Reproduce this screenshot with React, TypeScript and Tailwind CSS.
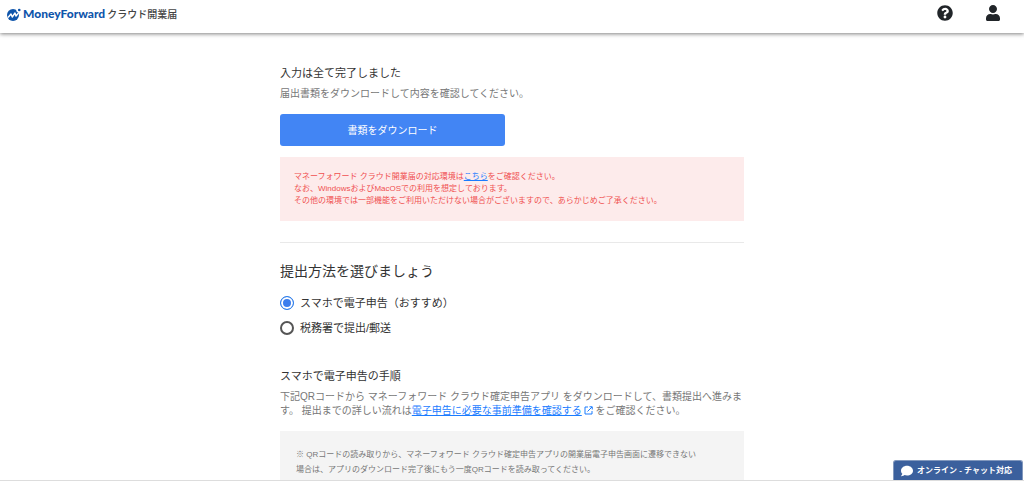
import { useState } from "react";
import { FaComment, FaQuestionCircle, FaUser } from "react-icons/fa";

const METHODS = [
    { id: "smartphone", label: "スマホで電子申告（おすすめ）" },
    { id: "office", label: "税務署で提出/郵送" },
];

const LogoMark = () => (
    <svg viewBox="0 0 28 26" className="h-[13px] w-[14px] shrink-0" aria-hidden="true">
        <circle cx="12" cy="14" r="12" fill="#0f55ab" />
        <path d="M18 0h10v10h-5l-4-3z" fill="#fff" />
        <path d="M2 19l6-7 2.500 6 5.500-8 2 6 5-6" fill="none" stroke="#fff" strokeWidth="2.800" strokeLinejoin="round" />
        <circle cx="24.500" cy="4" r="2.600" fill="#0f55ab" />
    </svg>
);

const ExternalIcon = () => (
    <svg viewBox="0 0 18 18" className="ml-0.5 inline h-[9px] w-[9px] align-[-1px]" fill="none" stroke="#1a7cff" strokeWidth="2" aria-hidden="true">
        <path d="M8 2H2v14h14v-6" />
        <path d="M11 1.500h5.500V7M16 2L7 11" />
    </svg>
);

const Header = () => (
    <header className="relative z-10 flex h-[33px] shrink-0 items-start justify-between bg-white pl-[7px] pr-[23px] shadow-[0_1px_4px_rgba(0,0,0,0.5)]">
        <a href="#" className="flex h-7 items-center">
            <LogoMark />
            <span className="ml-0.5 font-['Lato'] text-[12px] font-black text-[#0f55ab]">MoneyForward</span>
            <span className="ml-0.5 text-[10px] font-medium text-[#444]">クラウド開業届</span>
        </a>
        <nav className="flex h-[25px] items-center gap-8 text-[#212529]">
            <button type="button" aria-label="ヘルプ">
                <FaQuestionCircle className="size-4" />
            </button>
            <button type="button" aria-label="アカウント">
                <FaUser className="size-4" />
            </button>
        </nav>
    </header>
);

const App = () => {
    const [method, setMethod] = useState("smartphone");

    return (
        <div lang="ja" className="flex h-screen flex-col overflow-hidden border-b border-[#ddd] bg-white font-['Liberation_Sans','Noto_Sans_CJK_JP',sans-serif] text-[#333]">
            <Header />
            <main className="mx-auto w-full max-w-[464px] flex-1 pt-8">
                <h1 className="text-[11px] leading-4">入力は全て完了しました</h1>
                <p className="mt-[5px] text-[10px] leading-4 text-[#777]">
                    届出書類をダウンロードして内容を確認してください。
                </p>
                <button type="button" className="mt-3 block h-8 w-[225px] rounded-[3px] bg-[#4285f4] text-[10px] text-white">
                    書類をダウンロード
                </button>

                <div className="mt-[11px] bg-[#fdebeb] p-3.5 text-[8px] leading-3 text-[#f05050]">
                    <p>
                        マネーフォワード クラウド開業届の対応環境は
                        <a href="#" className="text-[#1a7cff] underline">こちら</a>
                        をご確認ください。
                    </p>
                    <p>なお、WindowsおよびMacOSでの利用を想定しております。</p>
                    <p>その他の環境では一部機能をご利用いただけない場合がございますので、あらかじめご了承ください。</p>
                </div>

                <hr className="mt-[21px] border-[#e9e9e9]" />

                <h2 id="method" className="mt-[18px] text-[14px] leading-5">提出方法を選びましょう</h2>
                <div role="radiogroup" aria-labelledby="method" className="mt-3.5 grid gap-[9px]">
                    {METHODS.map((m) => (
                        <div key={m.id} className="flex items-center text-[11px] leading-4">
                            <input
                                type="radio"
                                id={m.id}
                                name="method"
                                checked={method === m.id}
                                onChange={() => setMethod(m.id)}
                                className="size-3.5 appearance-none rounded-full border-2 border-[#555] checked:border checked:border-[#2b7de9] checked:bg-[#3b7ded] checked:shadow-[inset_0_0_0_2px_#fff]"
                            />
                            <label htmlFor={m.id} className="pl-1.5">{m.label}</label>
                        </div>
                    ))}
                </div>

                <h3 className="mt-8 text-[11px] leading-4">スマホで電子申告の手順</h3>
                <p className="mt-1.5 whitespace-nowrap text-[10px] leading-[14px] text-[#777]">
                    下記QRコードから マネーフォワード クラウド確定申告アプリ をダウンロードして、書類提出へ進みま
                    <br />
                    す。 提出までの詳しい流れは
                    <a href="#" className="text-[#1a7cff] underline">
                        電子申告に必要な事前準備を確認する
                        <ExternalIcon />
                    </a>
                    {" "}をご確認ください。
                </p>

                <div className="mt-[13px] whitespace-nowrap bg-[#f4f4f4] p-4 text-[8px] leading-[15px] text-[#777]">
                    ※ QRコードの読み取りから、マネーフォワード クラウド確定申告アプリの開業届電子申告画面に遷移できない
                    <br />
                    場合は、アプリのダウンロード完了後にもう一度QRコードを読み取ってください。
                </div>
            </main>

            <button type="button" className="fixed bottom-px right-px z-20 flex h-5 w-[130px] items-center gap-1 whitespace-nowrap rounded-t-[3px] border border-b-0 border-[#8298bd] bg-[#3b609d] pl-[7px] text-[8px] font-bold text-white">
                <FaComment className="size-3" />
                オンライン - チャット対応
            </button>
        </div>
    );
};

export default App;
